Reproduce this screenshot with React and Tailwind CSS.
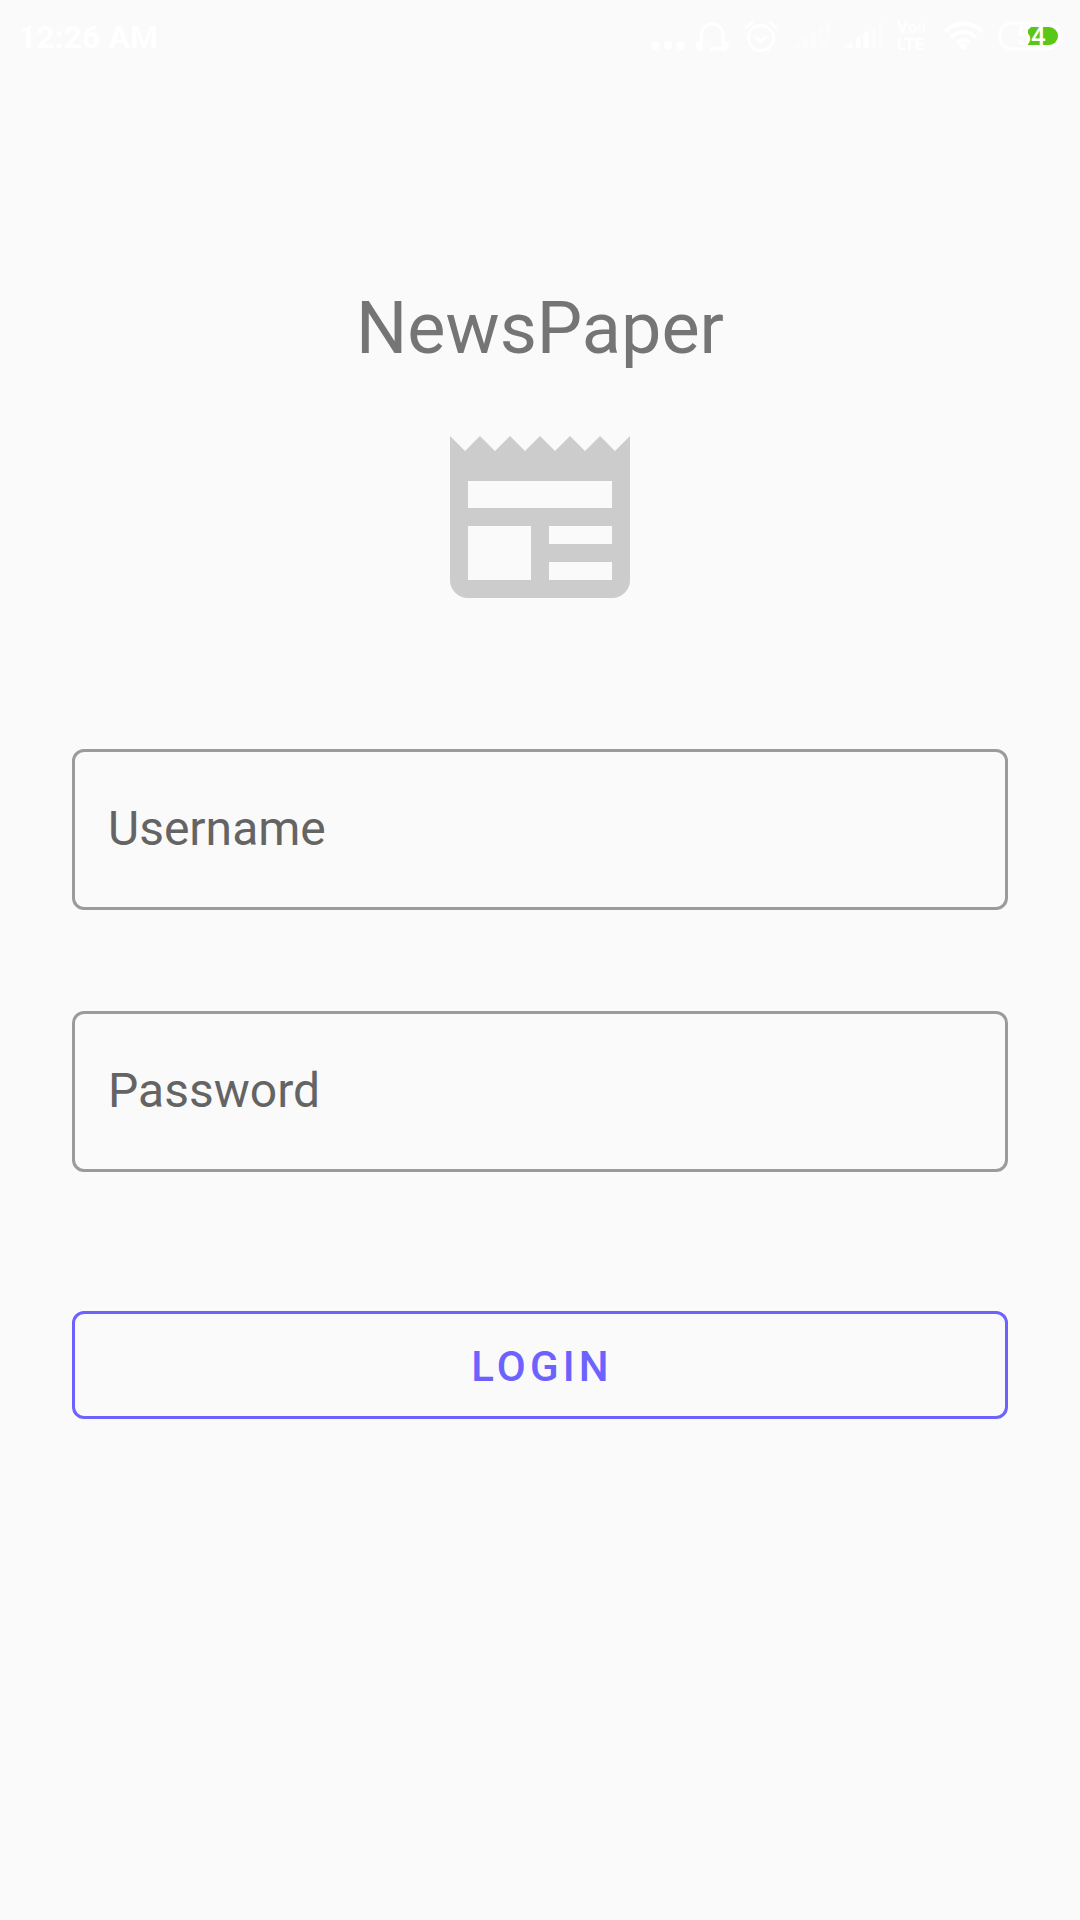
function DotsIcon() {
  return (
    <svg width="34" height="32" viewBox="0 0 34 32" fill="#fff" aria-hidden="true">
      <circle cx="4.5" cy="25.5" r="4.3" />
      <circle cx="17" cy="25.5" r="4.3" />
      <circle cx="29.5" cy="25.5" r="4.3" />
    </svg>
  );
}

function HeadsetIcon() {
  return (
    <svg width="34" height="32" viewBox="0 0 34 32" fill="none" stroke="#fff" strokeWidth="3" aria-hidden="true">
      <path d="M6.5 31V14A10.8 11 0 0 1 28 14V31" />
      <path d="M28 28.5H18" />
      <circle cx="18" cy="28.5" r="2.6" fill="#fff" stroke="none" />
      <path d="M5 21a4.5 4.5 0 0 0 0 9zM29.5 21a4.5 4.5 0 0 1 0 9z" fill="#fff" stroke="none" />
    </svg>
  );
}

function AlarmIcon() {
  return (
    <svg width="34" height="32" viewBox="0 0 34 32" fill="none" stroke="#fff" strokeWidth="2.8" strokeLinecap="round" strokeLinejoin="round" aria-hidden="true">
      <circle cx="18" cy="18" r="12.6" />
      <path d="M13 17.5L18 21.5L23 17" />
      <path d="M3 7.5L9 2.5M33 7.5L27 2.5" />
    </svg>
  );
}

function SignalIcon({ off }) {
  return (
    <svg width="39" height="32" viewBox="0 0 39 32" fill="#fff" fillOpacity={off ? 0.35 : 1} aria-hidden="true">
      <path d="M1 28L7 23Q8.5 22 8.5 24V28Z" />
      <path d="M12 20L14.5 17Q16.5 15.5 16.5 18V28H12Z" />
      <path d="M19.5 14L22.5 11.5Q24.5 10 24.5 13V28H19.5Z" />
      {off ? (
        <>
          <path d="M28 8L32 5V15H28ZM35 3L39 0V15H35Z" />
          <path d="M29 18L38 28M38 18L29 28" stroke="#fff" strokeOpacity="0.35" strokeWidth="2.5" />
        </>
      ) : (
        <path d="M27.5 8L31.5 5V28H27.5ZM35 3L39 0V28H35Z" fillOpacity="0.35" />
      )}
    </svg>
  );
}

function VolteIcon() {
  return (
    <div className="flex w-8 flex-col text-[17px] leading-[17px] font-bold text-white">
      <span className="flex items-center">
        Vo
        <svg className="shrink-0" width="9" height="12" viewBox="0 0 9 12" fill="none" stroke="#fff" strokeWidth="1.5" aria-hidden="true">
          <path d="M2 3q2 3 0 6M5 1q4 5 0 10" />
        </svg>
      </span>
      <span>LTE</span>
    </div>
  );
}

function WifiIcon() {
  return (
    <svg width="41" height="32" viewBox="0 0 41 32" fill="none" stroke="#fff" strokeWidth="4" aria-hidden="true">
      <path d="M2 11.5Q20.5 -5 39 11.5" />
      <path d="M8 17.5Q20.5 6.5 33 17.5" />
      <path d="M14 23Q20.5 17 27 23" />
      <circle cx="20.5" cy="26.5" r="3.2" fill="#fff" stroke="none" />
    </svg>
  );
}

function BatteryIcon() {
  return (
    <div className="relative h-8 w-[66px]">
      <svg width="66" height="32" viewBox="0 0 66 32" aria-hidden="true">
        <rect x="1.5" y="3" width="60" height="26" rx="13" fill="none" stroke="#fff" strokeWidth="3" />
        <path d="M64 12q2 4.500 0 9z" fill="#fff" />
        <path d="M33 7H51a9 9 0 0 1 0 18H30V10z" fill="#5ac618" />
      </svg>
      <span className="absolute inset-0 flex items-center justify-center text-[26px] leading-8 font-medium text-white">54</span>
    </div>
  );
}

function StatusBar() {
  return (
    <header className="flex h-[72px] items-center justify-between pr-4 pl-[18px] text-white">
      <time className="pt-0.5 text-[32px] leading-10 font-bold">12:26 AM</time>
      <div className="flex items-center gap-[14px]">
        <div className="flex items-center gap-[10px]">
          <DotsIcon />
          <HeadsetIcon />
        </div>
        <AlarmIcon />
        <SignalIcon off />
        <SignalIcon />
        <VolteIcon />
        <WifiIcon />
        <BatteryIcon />
      </div>
    </header>
  );
}

function NewspaperIcon() {
  return (
    <svg className="mt-[65px]" width="180" height="162" viewBox="0 0 20 18" fill="#ccc" role="img" aria-label="Newspaper">
      <path
        fillRule="evenodd"
        d="M0 0L1.67 1.67L3.33 0L5 1.67L6.67 0L8.33 1.67L10 0L11.67 1.67L13.33 0L15 1.67L16.67 0L18.33 1.67L20 0V16a2 2 0 0 1-2 2H2a2 2 0 0 1-2-2ZM2 5V8H18V5ZM2 10V16H9V10ZM11 10V12H18V10ZM11 14V16H18V14Z"
      />
    </svg>
  );
}

function Field({ id, type, label }) {
  return (
    <div className="relative">
      <input
        id={id}
        type={type}
        placeholder=" "
        className="peer block h-[161px] w-full rounded-xl border-[3px] border-[#9b9b9b] bg-transparent px-[33px] text-5xl text-[#212121] outline-none focus:border-[#6c63ff]"
      />
      <label
        htmlFor={id}
        className="pointer-events-none absolute inset-0 hidden items-center px-9 pb-0.5 text-5xl text-[#646464] peer-placeholder-shown:flex"
      >
        {label}
      </label>
    </div>
  );
}

export default function App() {
  return (
    <div className="min-h-screen bg-[#fafafa] font-['Roboto',sans-serif]">
      <StatusBar />
      <main className="flex flex-col items-center px-[72px] pt-[215px]">
        <h1 className="text-[72px] leading-[84px] text-[#757575]">NewsPaper</h1>
        <NewspaperIcon />
        <form className="mt-[151px] flex w-full flex-col gap-[101px]" onSubmit={(e) => e.preventDefault()}>
          <Field id="username" type="text" label="Username" />
          <Field id="password" type="password" label="Password" />
          <button
            type="submit"
            className="mt-[38px] h-[108px] w-full rounded-xl border-[3px] border-[#6c63ff] pt-1 pl-1 text-[42px] leading-[50px] font-medium tracking-widest text-[#6c63ff]"
          >
            LOGIN
          </button>
        </form>
      </main>
    </div>
  );
}
